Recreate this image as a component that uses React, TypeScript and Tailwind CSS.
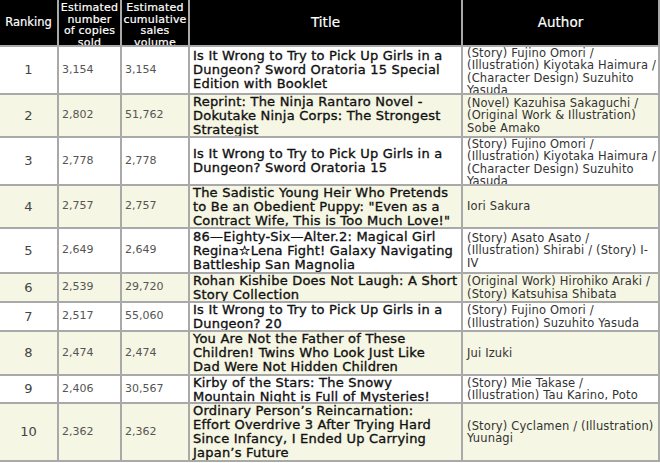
import React from 'react';

type Row = {
  rank: number;
  copies: string;
  total: string;
  title: string[];
  author: string[];
  h: string;
  bg: string;
};

const rows: Row[] = [
  {
    rank: 1, copies: '3,154', total: '3,154', h: 'h-[46px]', bg: 'bg-white',
    title: ['Is It Wrong to Try to Pick Up Girls in a', 'Dungeon? Sword Oratoria 15 Special', 'Edition with Booklet'],
    author: ['(Story) Fujino Omori /', '(Illustration) Kiyotaka Haimura /', '(Character Design) Suzuhito', 'Yasuda'],
  },
  {
    rank: 2, copies: '2,802', total: '51,762', h: 'h-[41px]', bg: 'bg-[#f5f6e3]',
    title: ['Reprint: The Ninja Rantaro Novel -', 'Dokutake Ninja Corps: The Strongest', 'Strategist'],
    author: ['(Novel) Kazuhisa Sakaguchi /', '(Original Work & Illustration)', 'Sobe Amako'],
  },
  {
    rank: 3, copies: '2,778', total: '2,778', h: 'h-[46px]', bg: 'bg-white',
    title: ['Is It Wrong to Try to Pick Up Girls in a', 'Dungeon? Sword Oratoria 15'],
    author: ['(Story) Fujino Omori /', '(Illustration) Kiyotaka Haimura /', '(Character Design) Suzuhito', 'Yasuda'],
  },
  {
    rank: 4, copies: '2,757', total: '2,757', h: 'h-[41px]', bg: 'bg-[#f5f6e3]',
    title: ['The Sadistic Young Heir Who Pretends', 'to Be an Obedient Puppy: "Even as a', 'Contract Wife, This is Too Much Love!"'],
    author: ['Iori Sakura'],
  },
  {
    rank: 5, copies: '2,649', total: '2,649', h: 'h-[43px]', bg: 'bg-white',
    title: ['86\u2014Eighty-Six\u2014Alter.2: Magical Girl', 'Regina\u2606Lena Fight! Galaxy Navigating', 'Battleship San Magnolia'],
    author: ['(Story) Asato Asato /', '(Illustration) Shirabi / (Story) I-', 'IV'],
  },
  {
    rank: 6, copies: '2,539', total: '29,720', h: 'h-[27px]', bg: 'bg-[#f5f6e3]',
    title: ['Rohan Kishibe Does Not Laugh: A Short', 'Story Collection'],
    author: ['(Original Work) Hirohiko Araki /', '(Story) Katsuhisa Shibata'],
  },
  {
    rank: 7, copies: '2,517', total: '55,060', h: 'h-[27px]', bg: 'bg-white',
    title: ['Is It Wrong to Try to Pick Up Girls in a', 'Dungeon? 20'],
    author: ['(Story) Fujino Omori /', '(Illustration) Suzuhito Yasuda'],
  },
  {
    rank: 8, copies: '2,474', total: '2,474', h: 'h-[42px]', bg: 'bg-[#f5f6e3]',
    title: ['You Are Not the Father of These', 'Children! Twins Who Look Just Like', 'Dad Were Not Hidden Children'],
    author: ['Jui Izuki'],
  },
  {
    rank: 9, copies: '2,406', total: '30,567', h: 'h-[26px]', bg: 'bg-white',
    title: ['Kirby of the Stars: The Snowy', 'Mountain Night is Full of Mysteries!'],
    author: ['(Story) Mie Takase /', '(Illustration) Tau Karino, Poto'],
  },
  {
    rank: 10, copies: '2,362', total: '2,362', h: 'h-[56px]', bg: 'bg-[#f5f6e3]',
    title: ['Ordinary Person\u2019s Reincarnation:', 'Effort Overdrive 3 After Trying Hard', 'Since Infancy, I Ended Up Carrying', 'Japan\u2019s Future'],
    author: ['(Story) Cyclamen / (Illustration)', 'Yuunagi'],
  },
];

const cols = 'grid grid-cols-[57px_61px_66px_271px_195px] gap-x-[2px]';

export default function App() {
  return (
    <div className="w-[660px] h-[463px] bg-white overflow-hidden font-['DejaVu_Sans',sans-serif]">
      <div className="flex flex-col gap-y-[2px] bg-[#a9a9a9] pr-[2px] pb-[2px] w-[660px]">
        {/* Header */}
        <div className={`${cols} h-[45px] text-white [-webkit-text-stroke:0.2px_#fff]`}>
          <div className="bg-black text-[11.5px] flex items-center justify-center">Ranking</div>
          <div className="bg-black text-[11px] leading-[11.7px] tracking-[0.2px] text-center pt-[2px] overflow-hidden">
            Estimated<br />number<br />of copies<br />sold
          </div>
          <div className="bg-black text-[11px] leading-[11.7px] tracking-[0.2px] text-center pt-[2px] overflow-hidden">
            Estimated<br />cumulative<br />sales<br />volume
          </div>
          <div className="bg-black text-[13.5px] flex items-center justify-center">Title</div>
          <div className="bg-black text-[13.5px] flex items-center justify-center">Author</div>
        </div>

        {rows.map((r) => (
          <div key={r.rank} className={`${cols} ${r.h}`}>
            <div className={`${r.bg} flex items-center justify-center text-[13px] text-[#444]`}>{r.rank}</div>
            <div className={`${r.bg} flex items-center pl-[3px] text-[11px] text-[#555]`}>{r.copies}</div>
            <div className={`${r.bg} flex items-center pl-[3px] text-[11px] text-[#555]`}>{r.total}</div>
            <div className={`${r.bg} flex flex-col overflow-hidden pl-[3px]`}>
              <div className="my-auto text-[13px] leading-[14px] tracking-[0.22px] text-[#111] [-webkit-text-stroke:0.35px_#111] whitespace-nowrap">
                {r.title.map((t, i) => (
                  <div key={i}>{t}</div>
                ))}
              </div>
            </div>
            <div className={`${r.bg} flex flex-col overflow-hidden pl-[4px]`}>
              <div className="my-auto text-[11.5px] leading-[12.3px] tracking-[0.15px] text-[#333] whitespace-nowrap">
                {r.author.map((t, i) => (
                  <div key={i}>{t}</div>
                ))}
              </div>
            </div>
          </div>
        ))}
      </div>
    </div>
  );
}
